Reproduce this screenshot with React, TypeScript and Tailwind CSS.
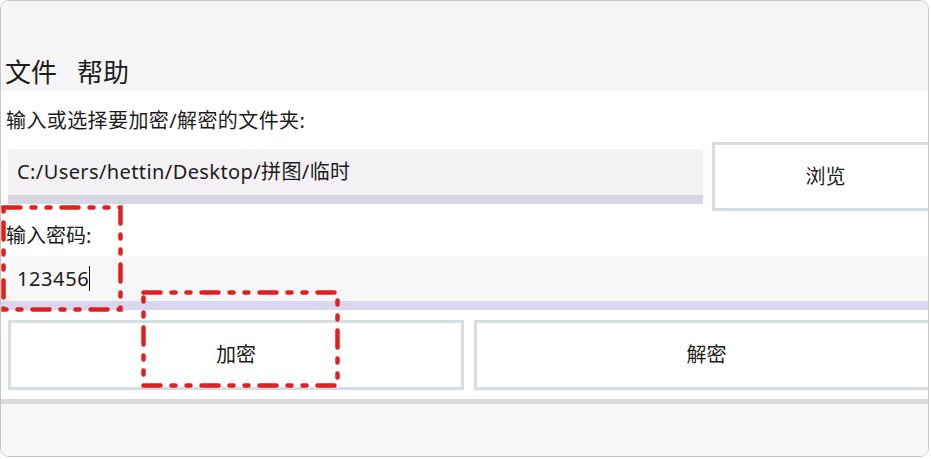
import React from 'react';

const font = { fontFamily: '"Noto Sans", "Noto Sans CJK SC", sans-serif' };

const DashBox: React.FC<{ className: string; w: number; h: number }> = ({ className, w, h }) => (
  <svg className={className} width={w} height={h} viewBox={`0 0 ${w} ${h}`}>
    <rect
      x="2.5"
      y="2.5"
      width={w - 5}
      height={h - 5}
      fill="none"
      stroke="#e0201c"
      strokeWidth="4.5"
      strokeDasharray="17 11 4 11 4 11"
      strokeLinecap="round"
    />
  </svg>
);

const App: React.FC = () => {
  return (
    <div className="w-[931px] h-[459px] bg-white relative" style={font}>
      <div className="w-[929px] h-[457px] rounded-[9px] border border-[#c6c6c8] overflow-hidden flex flex-col bg-[#f6f7f9] text-[#1c1c1c]">
        {/* title + menu */}
        <div className="h-[90px] shrink-0 bg-[#f5f5f6] flex items-end pb-[3px] pl-[4px] gap-[20px] text-[26px] leading-[32px]">
          <span>文件</span>
          <span>帮助</span>
        </div>

        {/* folder chooser */}
        <div className="bg-white pt-[18px] pb-[8px] shrink-0">
          <div className="pl-[5px] text-[20px] leading-[24px] tracking-[0.4px]">输入或选择要加密/解密的文件夹:</div>
          <div className="mt-[9px] flex items-start gap-[9px] pl-[7px]">
            <div className="mt-[7px] w-[695px] h-[55px] bg-[#f3f1f4] border-b-[9px] border-[#d7d6e3] flex items-center pl-[9px] text-[20px] tracking-[0.4px]">
              C:/Users/hettin/Desktop/拼图/临时
            </div>
            <div className="flex-1 h-[69px] border-[3px] border-r-0 border-[#d5dde8] bg-white flex items-center justify-center text-[20px] pl-[8px]">
              浏览
            </div>
          </div>
          <div className="mt-[13px] pl-[5px] text-[20px] leading-[24px]">输入密码:</div>
        </div>

        {/* password */}
        <div className="h-[54px] shrink-0 bg-[#f7f7f8] border-b-[9px] border-[#d9d7f0] flex items-center pl-[16px] text-[20px]">
          <span className="tracking-[0.6px]">123456</span>
          <span className="w-[1px] h-[25px] bg-[#111]" />
        </div>

        {/* actions */}
        <div className="bg-white pt-[10px] pb-[9px] pl-[7px] flex gap-[10px] shrink-0 text-[20px]">
          <div className="w-[456px] h-[70px] border-[3px] border-[#d5dde7] flex items-center justify-center">加密</div>
          <div className="flex-1 h-[70px] border-[3px] border-r-0 border-[#d5dde7] flex items-center justify-center pl-[8px]">解密</div>
        </div>
        <div className="h-[5px] shrink-0 bg-[#d9dade]" />
        <div className="flex-1 bg-[#f6f7f9]" />
      </div>

      {/* annotation boxes */}
      <DashBox className="absolute left-[1px] top-[205px]" w={122} h={107} />
      <DashBox className="absolute left-[141px] top-[290px]" w={199} h={98} />
    </div>
  );
};

export default App;
